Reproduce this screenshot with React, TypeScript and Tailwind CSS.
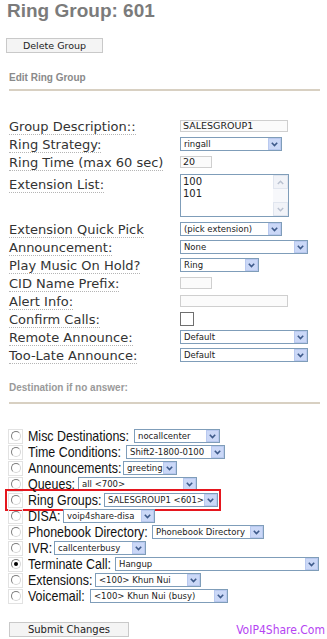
import React from 'react';

const Chevron: React.FC = () => (
  <svg width="7" height="5" viewBox="0 0 7 5">
    <path d="M0.8 0.8 L3.5 3.6 L6.2 0.8" fill="none" stroke="#3e5a8a" strokeWidth="1.6" />
  </svg>
);

const Select: React.FC<{ w: string; text: string }> = ({ w, text }) => (
  <div className={`flex h-[14px] shrink-0 border border-[#7f9db9] bg-white ${w}`}>
    <span className="flex-1 overflow-hidden whitespace-nowrap pl-[3px] text-[8.5px] leading-[12px] text-[#222] font-['DejaVu_Sans',sans-serif]">
      {text}
    </span>
    <span className="flex w-[13px] items-center justify-center border border-[#b9c9ef] bg-[#cbd8f7]">
      <Chevron />
    </span>
  </div>
);

const TextInput: React.FC<{ w: string; value?: string }> = ({ w, value }) => (
  <div className={`h-[12px] border border-[#cfcfcf] bg-[#fbfbfb] pl-[2px] text-[9.5px] leading-[10px] text-[#222] font-['DejaVu_Sans',sans-serif] ${w}`}>
    {value}
  </div>
);

const Label: React.FC<{ children: React.ReactNode }> = ({ children }) => (
  <span className="border-b border-dotted border-[#b5b5b5] text-[13px] leading-[15px] text-[#333]">{children}</span>
);

const FormRow: React.FC<{ label: string; children?: React.ReactNode }> = ({ label, children }) => (
  <div className="flex h-[18px] items-center">
    <div className="w-[171px]">
      <Label>{label}</Label>
    </div>
    {children}
  </div>
);

const Radio: React.FC<{ checked?: boolean }> = ({ checked }) => (
  <div className="flex h-[15px] w-[15px] shrink-0 items-center justify-center border border-[#e2e2e2]">
    <div className="flex h-[10px] w-[10px] items-center justify-center rounded-full border border-[#7d7d7d] border-r-[#d6d6d6] border-b-[#d6d6d6] bg-white">
      {checked && <div className="h-[4px] w-[4px] rounded-full bg-black" />}
    </div>
  </div>
);

// label widths follow the condensed labels of the original page
const dests = [
  { label: 'Misc Destinations:', value: 'nocallcenter', lw: 'w-[102px]', w: 'w-[86px]' },
  { label: 'Time Conditions:', value: 'Shift2-1800-0100', lw: 'w-[94px]', w: 'w-[99px]' },
  { label: 'Announcements:', value: 'greeting', lw: 'w-[91px]', w: 'w-[54px]' },
  { label: 'Queues:', value: 'all <700>', lw: 'w-[46px]', w: 'w-[119px]' },
  { label: 'Ring Groups:', value: 'SALESGROUP1 <601>', lw: 'w-[72px]', w: 'w-[114px]', mark: true },
  { label: 'DISA:', value: 'voip4share-disa', lw: 'w-[31px]', w: 'w-[92px]' },
  { label: 'Phonebook Directory:', value: 'Phonebook Directory', lw: 'w-[120px]', w: 'w-[112px]' },
  { label: 'IVR:', value: 'callcenterbusy', lw: 'w-[22px]', w: 'w-[92px]' },
  { label: 'Terminate Call:', value: 'Hangup', lw: 'w-[83px]', w: 'w-[204px]', checked: true },
  { label: 'Extensions:', value: '<100> Khun Nui', lw: 'w-[63px]', w: 'w-[106px]' },
  { label: 'Voicemail:', value: '<100> Khun Nui (busy)', lw: 'w-[58px]', w: 'w-[138px]' },
];

export default function App() {
  return (
    <div className="relative h-[639px] w-[327px] overflow-hidden bg-white font-['DejaVu_Sans',sans-serif]">
      <h1 className="pl-[7px] pt-[1px] text-[19px] font-bold leading-[20px] text-[#7b7b7b] font-['Liberation_Sans',Arial,sans-serif]">
        Ring Group: 601
      </h1>

      <button className="ml-[6px] mt-[17px] block h-[15px] w-[97px] border border-[#c9c9c9] bg-[#f4f4f4] text-[9.5px] leading-[13px] text-[#222]">
        Delete Group
      </button>

      <div className="ml-[9px] mt-[19px] text-[10px] font-bold leading-[12px] text-[#8a8a8a] font-['Liberation_Sans',Arial,sans-serif]">
        Edit Ring Group
      </div>
      <div className="ml-[9px] mt-[5px] h-[2px] w-[311px] bg-[#d8d0c2]" />

      <div className="ml-[9px] mt-[26px]">
        <FormRow label="Group Description::">
          <TextInput w="w-[108px]" value="SALESGROUP1" />
        </FormRow>
        <FormRow label="Ring Strategy:">
          <Select w="w-[102px]" text="ringall" />
        </FormRow>
        <FormRow label="Ring Time (max 60 sec)">
          <TextInput w="w-[32px]" value="20" />
        </FormRow>
        <div className="flex h-[49px] items-start">
          <div className="w-[171px] pt-[1px]">
            <Label>Extension List:</Label>
          </div>
          <div className="mt-[3px] flex h-[43px] w-[109px] border border-[#7f9db9] bg-white">
            <div className="flex-1 pl-[2px] pt-[1px] text-[10px] leading-[12px] text-[#222]">
              100
              <br />
              101
            </div>
            <div className="flex w-[15px] flex-col justify-between bg-[#f7f8fb]">
              <div className="flex h-[14px] items-center justify-center border border-[#e1e6ef] bg-[#f1f3f8]">
                <svg width="7" height="5" viewBox="0 0 7 5">
                  <path d="M0.8 4 L3.5 1.2 L6.2 4" fill="none" stroke="#b9c1d0" strokeWidth="1.4" />
                </svg>
              </div>
              <div className="flex h-[14px] items-center justify-center border border-[#e1e6ef] bg-[#f1f3f8]">
                <svg width="7" height="5" viewBox="0 0 7 5">
                  <path d="M0.8 1 L3.5 3.8 L6.2 1" fill="none" stroke="#b9c1d0" strokeWidth="1.4" />
                </svg>
              </div>
            </div>
          </div>
        </div>
        <FormRow label="Extension Quick Pick">
          <Select w="w-[102px]" text="(pick extension)" />
        </FormRow>
        <FormRow label="Announcement:">
          <Select w="w-[128px]" text="None" />
        </FormRow>
        <FormRow label="Play Music On Hold?">
          <Select w="w-[79px]" text="Ring" />
        </FormRow>
        <FormRow label="CID Name Prefix:">
          <TextInput w="w-[32px]" />
        </FormRow>
        <FormRow label="Alert Info:">
          <TextInput w="w-[108px]" />
        </FormRow>
        <FormRow label="Confirm Calls:">
          <div className="h-[14px] w-[14px] border border-[#6f6f6f] bg-white" />
        </FormRow>
        <FormRow label="Remote Announce:">
          <Select w="w-[128px]" text="Default" />
        </FormRow>
        <FormRow label="Too-Late Announce:">
          <Select w="w-[128px]" text="Default" />
        </FormRow>
      </div>

      <div className="ml-[9px] mt-[18px] text-[10px] font-bold leading-[12px] text-[#9a9a9a] font-['Liberation_Sans',Arial,sans-serif]">
        Destination if no answer:
      </div>
      <div className="ml-[9px] mt-[8px] h-[2px] w-[311px] bg-[#d8d0c2]" />

      <div className="ml-[8px] mt-[24px] flex flex-col items-start">
        {dests.map((d) => (
          <div
            key={d.label}
            className={`flex h-[16px] items-center ${d.mark ? 'outline-2 outline-offset-[1px] outline-[#e5161e]' : ''}`}
          >
            <Radio checked={d.checked} />
            <div className={`ml-[5px] mr-[4px] shrink-0 overflow-visible ${d.lw}`}>
              <span className="block origin-left scale-x-[0.83] whitespace-nowrap text-[15px] leading-[16px] text-[#111] font-['Liberation_Sans',Arial,sans-serif]">
                {d.label}
              </span>
            </div>
            <Select w={d.w} text={d.value} />
          </div>
        ))}
      </div>

      <div className="mt-[18px] flex items-end justify-between pl-[9px] pr-[2px]">
        <button className="h-[15px] w-[120px] border border-[#c9c9c9] bg-[#f4f4f4] text-[10px] leading-[13px] text-[#222]">
          Submit Changes
        </button>
        <span className="text-[12px] leading-[14px] text-[#b544f2] font-['DejaVu_Sans_Condensed','Liberation_Sans',sans-serif]">
          VoIP4Share.Com
        </span>
      </div>
    </div>
  );
}
